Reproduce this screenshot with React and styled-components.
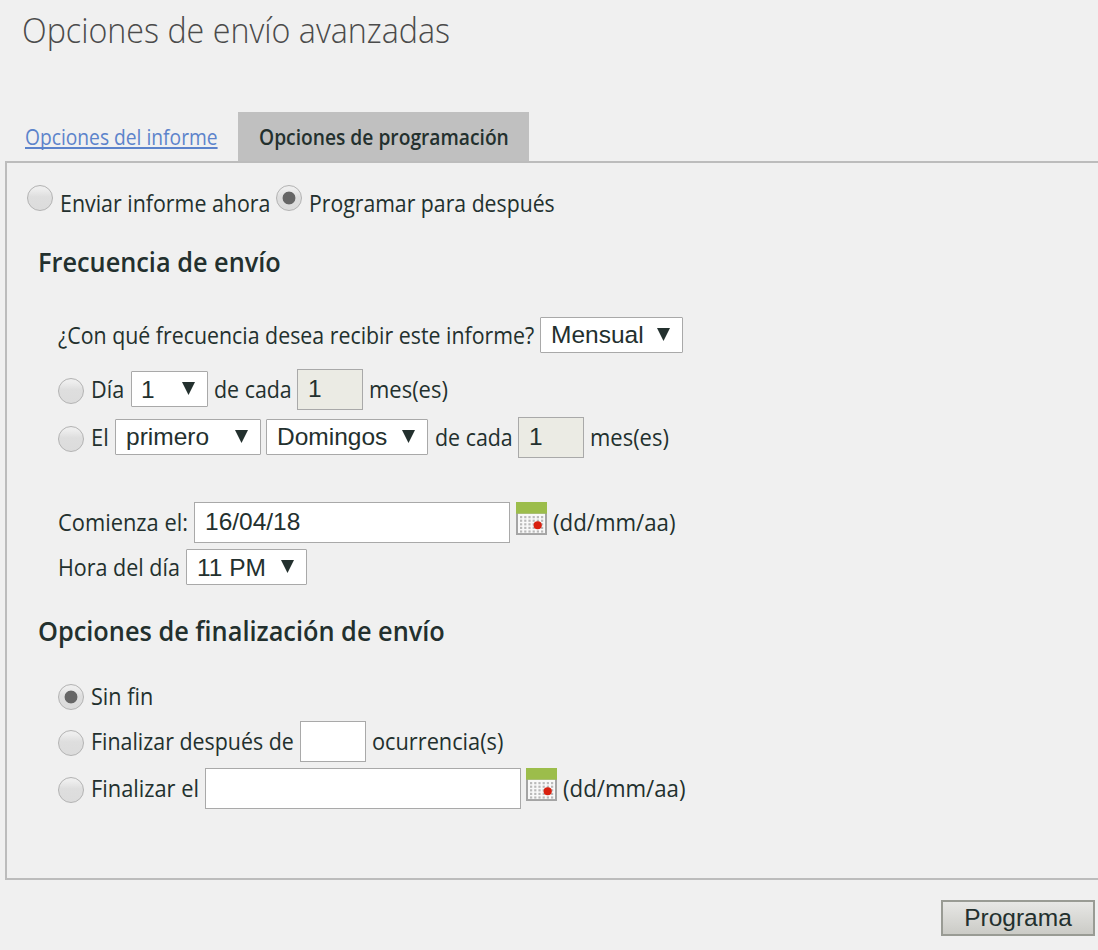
import React from 'react';
import styled, { createGlobalStyle, css } from 'styled-components';

const Global = createGlobalStyle`
  body { margin: 0; background: #f0f0f0; overflow: hidden; }
  * { box-sizing: border-box; }
`;

const Page = styled.main`
  height: 950px;
  display: flex;
  flex-direction: column;
  padding-left: 5px;
  color: #23302e;
  font-family: 'Open Sans', 'Noto Sans', sans-serif;
  font-size: 23px;
`;

const Fit = styled.span`
  display: block;
  flex: none;
  width: ${p => p.$w}px;
  margin-left: ${p => p.$ml || 0}px;
  white-space: nowrap;
  > span {
    display: inline-block;
    transform-origin: 0 50%;
    transform: scaleX(${p => p.$k || 0.93});
  }
`;

const Header = styled.header`
  height: 112px;
  padding: 6px 0 0 17px;
`;

const Title = styled.h1`
  margin: 0;
  font-size: 34px;
  line-height: 48px;
  font-weight: 300;
  color: #4b4b4b;
`;

const Tabs = styled.nav`
  display: flex;
  height: 49px;
  font-size: 21.5px;
  line-height: 50px;
`;

const Tab = styled.a`
  width: ${p => p.$width}px;
  padding-left: ${p => p.$pad}px;
  ${p => p.$active ? css`
    background: #c0c0c0;
    font-weight: 600;
  ` : css`
    color: #5c83cb;
    span > span {
      text-decoration: underline;
      text-decoration-thickness: 2px;
      text-decoration-skip-ink: none;
      text-underline-offset: 2px;
    }
  `}
`;

const Panel = styled.section`
  height: 719px;
  border: 2px solid #bcbcbc;
  border-right: 0;
  padding-top: 19px;
`;

const Heading = styled.h2`
  margin: ${p => p.$top}px 0 0 31px;
  height: 36px;
  line-height: 37px;
  font-size: 26.5px;
  font-weight: 600;
`;

const Row = styled.div`
  display: flex;
  align-items: center;
  height: ${p => p.$h || 41}px;
  line-height: ${p => p.$lh || p.$h || 41}px;
  margin-top: ${p => p.$top || 0}px;
  padding-left: ${p => p.$pad || 51}px;
`;

const Radio = styled.span`
  flex: none;
  width: 26px;
  height: 26px;
  border: 1.5px solid #b3b3b3;
  border-radius: 50%;
  margin-top: ${p => p.$shift ?? 3}px;
  margin-left: ${p => p.$ml || 0}px;
  background: ${p => p.$checked
    ? 'radial-gradient(circle, #666 0 6px, transparent 6.8px), '
    : ''}linear-gradient(#eeeeee 12%, #dedede 45%, #dcdcdc);
`;

const SelectBox = styled.span`
  flex: none;
  display: flex;
  align-items: center;
  justify-content: space-between;
  width: ${p => p.$w}px;
  height: 36px;
  margin: ${p => p.$shift || 0}px 0 0 ${p => p.$ml || 0}px;
  padding: 0 12px 0 ${p => p.$pl || 10}px;
  background: #fff;
  border: 1px solid #a9a9a9;
  border-radius: 1px;
  font: 24.5px/${p => p.$lh || 35}px 'Liberation Sans', Arial, sans-serif;
`;

const Arrow = styled.svg`
  display: block;
  width: 13px;
  height: 13px;
  margin-top: -1px;
`;

const Field = styled.span`
  flex: none;
  width: ${p => p.$w || 66}px;
  height: 41px;
  margin-left: ${p => p.$ml || 0}px;
  padding-left: 10px;
  border: 1px solid #a9a9a9;
  background: ${p => p.$disabled ? '#ebebe4' : '#fff'};
  font: 24.5px/38px 'Liberation Sans', Arial, sans-serif;
`;

const CalendarSvg = styled.svg`
  flex: none;
  align-self: flex-start;
  width: 31px;
  height: 33px;
  margin-left: ${p => p.$ml || 6}px;
`;

const Footer = styled.footer`
  display: flex;
  justify-content: flex-end;
  padding: 20px 3px 0 0;
`;

const Button = styled.button`
  width: 154px;
  height: 36px;
  padding: 0;
  border: 2px solid #999b94;
  background: linear-gradient(#e7e7e5, #cbcbc6);
  color: #23302e;
  font: 24.5px/30px 'Liberation Sans', Arial, sans-serif;
`;

const Text = ({ w, k, ml, children }) => (
  <Fit $w={w} $k={k} $ml={ml}><span>{children}</span></Fit>
);

const Select = ({ w, ml, pl, lh, shift, children }) => (
  <SelectBox $w={w} $ml={ml} $pl={pl} $lh={lh} $shift={shift}>
    {children}
    <Arrow viewBox="0 0 13 13"><path d="M0 0H13L6.5 13Z" fill="#23302e" /></Arrow>
  </SelectBox>
);

const dots = [];
for (let y = 0; y < 5; y++) for (let x = 0; x < 6; x++) dots.push([5 + x * 4.2, 15.5 + y * 3.7]);

const Calendar = ({ ml }) => (
  <CalendarSvg $ml={ml} viewBox="0 0 31 34" preserveAspectRatio="none">
    <rect width="31" height="34" fill="#a4a4a4" />
    <rect x="2" y="12" width="27" height="20" fill="#f8f8f8" />
    <rect width="31" height="12" fill="#9cbd4b" />
    {dots.map(([x, y]) => <rect key={`${x}-${y}`} x={x - 1} y={y - 1} width="2.2" height="2.2" fill="#b9b9b9" />)}
    <circle cx="21.7" cy="24" r="4.1" fill="#d9200f" />
  </CalendarSvg>
);

export default function App() {
  return (
    <Page>
      <Global />
      <Header><Title><Text w={428} k={0.948}>Opciones de envío avanzadas</Text></Title></Header>
      <Tabs>
        <Tab $width={233} $pad={20}><Text w={193} k={0.894}>Opciones del informe</Text></Tab>
        <Tab $width={291} $pad={21} $active><Text w={250} k={0.894}>Opciones de programación</Text></Tab>
      </Tabs>
      <Panel>
        <Row $h={42} $pad={20}>
          <Radio $shift={-10} />
          <Text w={211} ml={7}>Enviar informe ahora</Text>
          <Radio $shift={-10} $ml={5} $checked />
          <Text w={246} ml={7} k={0.923}>Programar para después</Text>
        </Row>
        <Heading $top={20}><Text w={243} k={0.955}>Frecuencia de envío</Text></Heading>
        <Row $h={36} $lh={34} $top={37}>
          <Text w={477} k={0.928}>¿Con qué frecuencia desea recibir este informe?</Text>
          <Select w={143} ml={5} pl={10} lh={34}>Mensual</Select>
        </Row>
        <Row $top={16}>
          <Radio />
          <Text w={34} ml={7} k={0.94}>Día</Text>
          <Select w={77} ml={6} pl={9} shift={-1}>1</Select>
          <Text w={78} ml={6} k={0.93}>de cada</Text>
          <Field $disabled $ml={5}>1</Field>
          <Text w={80} ml={6} k={0.955}>mes(es)</Text>
        </Row>
        <Row $top={7}>
          <Radio />
          <Text w={19} ml={7} k={0.95}>El</Text>
          <Select w={146} ml={5} pl={10} lh={34} shift={-1}>primero</Select>
          <Select w={162} ml={5} lh={34} shift={-1}>Domingos</Select>
          <Text w={78} ml={7} k={0.93}>de cada</Text>
          <Field $disabled $ml={5}>1</Field>
          <Text w={80} ml={6} k={0.955}>mes(es)</Text>
        </Row>
        <Row $lh={39} $top={44}>
          <Text w={131} k={0.95}>Comienza el:</Text>
          <Field $w={316} $ml={5}>16/04/18</Field>
          <Calendar />
          <Text w={124} ml={6} k={0.967}>(dd/mm/aa)</Text>
        </Row>
        <Row $h={36} $top={6}>
          <Text w={122} k={0.935}>Hora del día</Text>
          <Select w={121} ml={6}>11 PM</Select>
        </Row>
        <Heading $top={28}><Text w={407} k={0.956}>Opciones de finalización de envío</Text></Heading>
        <Row $h={36} $lh={34} $top={29}>
          <Radio $shift={2} $checked />
          <Text w={63} ml={7} k={0.94}>Sin fin</Text>
        </Row>
        <Row $top={7}>
          <Radio />
          <Text w={204} ml={7}>Finalizar después de</Text>
          <Field $ml={5} />
          <Text w={133} ml={6} k={0.946}>ocurrencia(s)</Text>
        </Row>
        <Row $top={6}>
          <Radio />
          <Text w={108} ml={7} k={0.948}>Finalizar el</Text>
          <Field $w={316} $ml={6} />
          <Calendar ml={5} />
          <Text w={124} ml={6} k={0.967}>(dd/mm/aa)</Text>
        </Row>
      </Panel>
      <Footer><Button type="button">Programa</Button></Footer>
    </Page>
  );
}
